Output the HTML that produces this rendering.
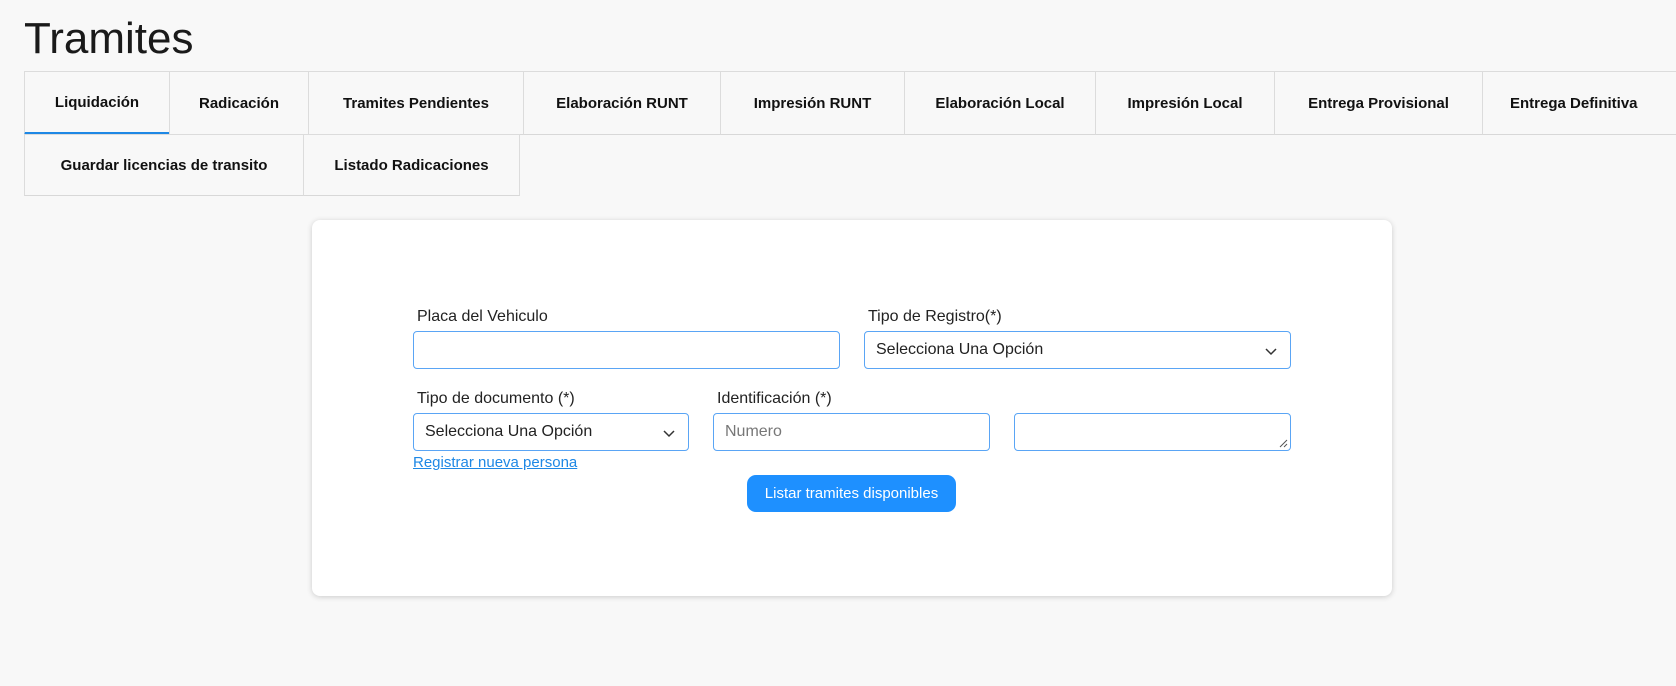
<!DOCTYPE html>
<html><head><meta charset="utf-8"><style>
*{box-sizing:border-box;margin:0;padding:0}
body{width:1676px;height:686px;background:#f8f8f8;font-family:"Liberation Sans",sans-serif;color:#212529;position:relative;overflow:hidden}
h1{position:absolute;left:24px;top:14px;font-size:44px;font-weight:400;color:#1a1a1a}
.tab{position:absolute;height:64px;border:1px solid #dcdcdc;border-bottom:1px solid #d8d8d8;display:flex;align-items:center;justify-content:center;font-weight:bold;font-size:15px;color:#111}
.tab.r2{height:62px}
.act{border-bottom:3px solid #1e88e5}
.card{position:absolute;left:312px;top:220px;width:1080px;height:376px;background:#fff;border-radius:8px;box-shadow:0 1px 6px rgba(0,0,0,.18)}
.lbl{position:absolute;font-size:16px;color:#222}
.in{position:absolute;height:38px;border:1px solid #5aa5f5;border-radius:4px;background:#fff;font-size:16px;display:flex;align-items:center;padding-left:11px;color:#222}
.chev{position:absolute;right:12px;top:12px}
a{position:absolute;left:413px;top:454px;font-size:15px;color:#1e88e5;text-decoration:underline}
.btn{position:absolute;left:747px;top:475px;width:209px;height:37px;background:#1e90ff;border-radius:9px;color:#fff;font-size:15px;display:flex;align-items:center;justify-content:center}
</style></head><body>
<h1>Tramites</h1>
<div class="tab act" style="left:24px;top:71px;width:146px">Liquidación</div>
<div class="tab" style="left:169px;top:71px;width:140px">Radicación</div>
<div class="tab" style="left:308px;top:71px;width:216px">Tramites Pendientes</div>
<div class="tab" style="left:523px;top:71px;width:198px">Elaboración RUNT</div>
<div class="tab" style="left:720px;top:71px;width:185px">Impresión RUNT</div>
<div class="tab" style="left:904px;top:71px;width:192px">Elaboración Local</div>
<div class="tab" style="left:1095px;top:71px;width:180px">Impresión Local</div>
<div class="tab" style="left:1274px;top:71px;width:209px">Entrega Provisional</div>
<div class="tab" style="left:1482px;top:71px;width:200px;justify-content:flex-start;padding-left:27px">Entrega Definitiva</div>
<div class="tab r2" style="left:24px;top:134px;width:280px">Guardar licencias de transito</div>
<div class="tab r2" style="left:303px;top:134px;width:217px">Listado Radicaciones</div>
<div class="card"></div>
<div class="lbl" style="left:417px;top:308px">Placa del Vehiculo</div>
<div class="in" style="left:413px;top:331px;width:427px"></div>
<div class="lbl" style="left:868px;top:308px">Tipo de Registro(*)</div>
<div class="in" style="left:864px;top:331px;width:427px">Selecciona Una Opción<svg class="chev" width="14" height="14" viewBox="0 0 14 14"><path d="M2 5l5 5 5-5" fill="none" stroke="#333" stroke-width="1.5"/></svg></div>
<div class="lbl" style="left:417px;top:390px">Tipo de documento (*)</div>
<div class="in" style="left:413px;top:413px;width:276px">Selecciona Una Opción<svg class="chev" width="14" height="14" viewBox="0 0 14 14"><path d="M2 5l5 5 5-5" fill="none" stroke="#333" stroke-width="1.5"/></svg></div>
<div class="lbl" style="left:717px;top:390px">Identificación (*)</div>
<div class="in" style="left:713px;top:413px;width:277px;color:#777">Numero</div>
<div class="in" style="left:1014px;top:413px;width:277px"><svg style="position:absolute;right:2px;bottom:2px" width="9" height="9"><path d="M1 8L8 1M5 8L8 5" stroke="#555"/></svg></div>
<a>Registrar nueva persona</a>
<div class="btn">Listar tramites disponibles</div>
</body></html>
